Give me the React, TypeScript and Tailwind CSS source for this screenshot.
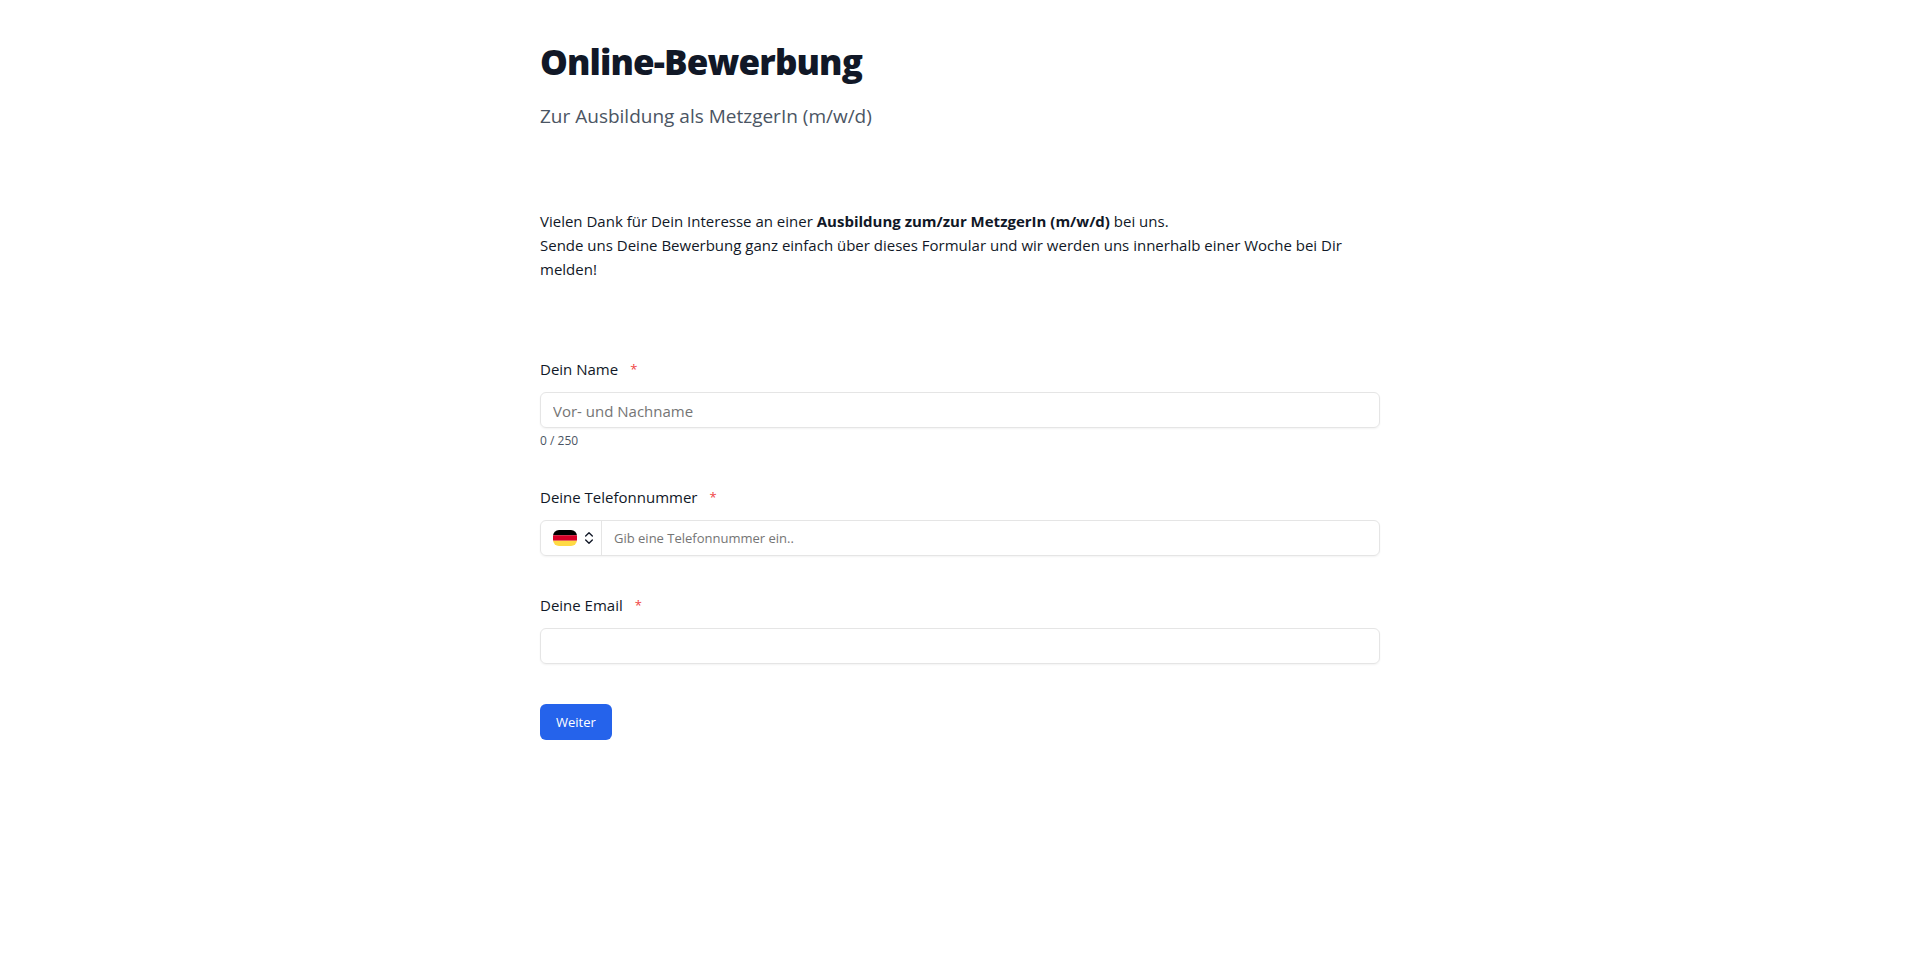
import { useState } from "react";
import { ChevronsUpDown } from "lucide-react";

const MAX_NAME = 250;

const inputClass =
  "w-full h-9 px-3 pt-px bg-transparent border border-[#e5e5e5] rounded-md shadow-xs outline-none placeholder:text-[#757575] focus:border-[#2563eb]";

function Label({ htmlFor, children }: { htmlFor: string; children: string }) {
  return (
    <label htmlFor={htmlFor} className="flex items-center gap-3 mb-[11px] leading-6">
      {children}
      <span className="text-[13px] leading-6 text-[#ef4444]">*</span>
    </label>
  );
}

function GermanFlag() {
  return (
    <svg viewBox="0 0 24 16" className="w-6 h-4 rounded-md" aria-hidden="true">
      <path fill="#000" d="M0 0h24v5.33H0z" />
      <path fill="#d80027" d="M0 5.33h24v5.34H0z" />
      <path fill="#ffda44" d="M0 10.67h24V16H0z" />
    </svg>
  );
}

export default function App() {
  const [form, setForm] = useState({ name: "", phone: "", email: "" });

  return (
    <main className="min-h-screen pl-[5px] font-['Open_Sans','Noto_Sans',sans-serif] text-[15px] text-[#111827] bg-white">
      <div className="w-full max-w-[840px] pt-[42px] mx-auto">
        <h1 className="text-[35px] font-extrabold leading-10 tracking-tight">Online-Bewerbung</h1>
        <p className="mt-5 text-[19px] leading-7 text-[#4b5563]">Zur Ausbildung als MetzgerIn (m/w/d)</p>

        <p className="mt-[79px] leading-6">
          Vielen Dank für Dein Interesse an einer <strong>Ausbildung zum/zur MetzgerIn (m/w/d)</strong> bei uns.
          <br />
          Sende uns Deine Bewerbung ganz einfach über dieses Formular und wir werden uns innerhalb einer Woche bei Dir
          melden!
        </p>

        <form className="mt-19" onSubmit={(e) => e.preventDefault()}>
          <div>
            <Label htmlFor="name">Dein Name</Label>
            <input id="name" type="text" maxLength={MAX_NAME} placeholder="Vor- und Nachname"
              className={inputClass}
              value={form.name} onChange={(e) => setForm((f) => ({ ...f, name: e.target.value }))} />
            <div className="mt-[5px] text-xs text-[#4b5563]">{form.name.length} / {MAX_NAME}</div>
          </div>

          <div className="mt-9">
            <Label htmlFor="phone">Deine Telefonnummer</Label>
            <div className="flex h-9 border border-[#e5e5e5] rounded-md shadow-xs">
              <button type="button" aria-label="Land" className="flex items-center gap-1 pl-3 pr-1 border-r border-[#e5e5e5]">
                <GermanFlag />
                <ChevronsUpDown className="size-4" />
              </button>
              <input id="phone" type="tel" placeholder="Gib eine Telefonnummer ein.."
                className="flex-1 min-w-0 px-3 pt-0.5 text-[13px] bg-transparent outline-none placeholder:text-[#757575]"
                value={form.phone} onChange={(e) => setForm((f) => ({ ...f, phone: e.target.value }))} />
            </div>
          </div>

          <div className="mt-[37px]">
            <Label htmlFor="email">Deine Email</Label>
            <input id="email" type="email" className={inputClass}
              value={form.email} onChange={(e) => setForm((f) => ({ ...f, email: e.target.value }))} />
          </div>

          <button type="submit" className="h-9 px-4 pt-0.5 mt-10 text-[13px] text-white bg-[#2563eb] rounded-md hover:bg-[#1d4ed8]">
            Weiter
          </button>
        </form>
      </div>
    </main>
  );
}
